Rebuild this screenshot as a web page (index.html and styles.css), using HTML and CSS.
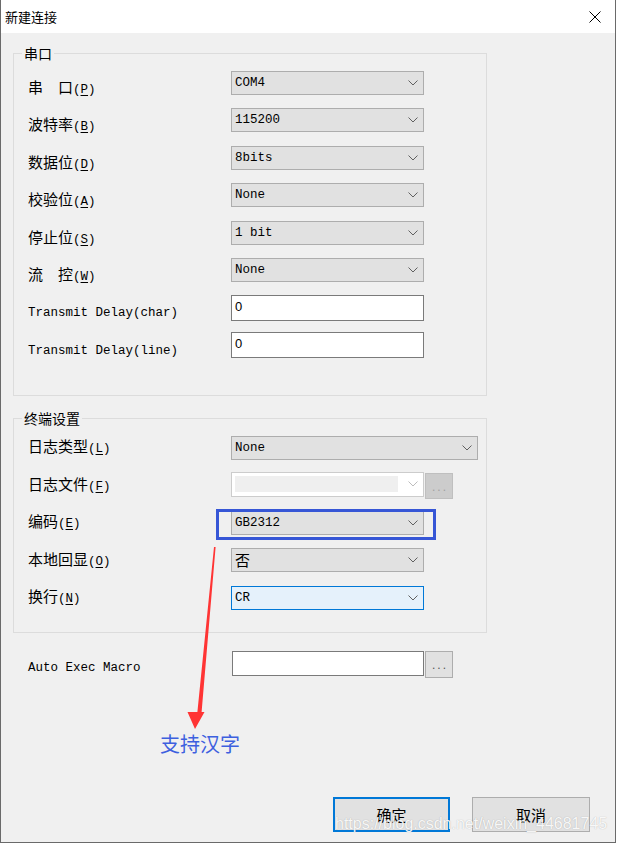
FILE: index.html
```html
<!DOCTYPE html>
<html lang="zh">
<head>
<meta charset="utf-8">
<title>新建连接</title>
<link rel="stylesheet" href="styles.css">
</head>
<body>
<div class="window">
  <div class="titlebar">
    <span class="title">新建连接</span>
    <svg class="close" width="12" height="12" viewBox="0 0 12 12"><path d="M0.5 0.5 L11.5 11.5 M11.5 0.5 L0.5 11.5" stroke="#000" stroke-width="1" fill="none"/></svg>
  </div>
  <div class="content">
    <fieldset class="group g-serial">
      <legend>串口</legend>
      <div class="rows">
        <label class="lbl"><span class="zh">串　口</span>(<u>P</u>)</label>
        <div class="combo"><span class="val">COM4</span><svg class="chev" width="10" height="6" viewBox="0 0 10 6"><path d="M0.5 0.5 L5 5 L9.5 0.5"/></svg></div>

        <label class="lbl"><span class="zh">波特率</span>(<u>B</u>)</label>
        <div class="combo"><span class="val">115200</span><svg class="chev" width="10" height="6" viewBox="0 0 10 6"><path d="M0.5 0.5 L5 5 L9.5 0.5"/></svg></div>

        <label class="lbl"><span class="zh">数据位</span>(<u>D</u>)</label>
        <div class="combo"><span class="val">8bits</span><svg class="chev" width="10" height="6" viewBox="0 0 10 6"><path d="M0.5 0.5 L5 5 L9.5 0.5"/></svg></div>

        <label class="lbl"><span class="zh">校验位</span>(<u>A</u>)</label>
        <div class="combo"><span class="val">None</span><svg class="chev" width="10" height="6" viewBox="0 0 10 6"><path d="M0.5 0.5 L5 5 L9.5 0.5"/></svg></div>

        <label class="lbl"><span class="zh">停止位</span>(<u>S</u>)</label>
        <div class="combo"><span class="val">1 bit</span><svg class="chev" width="10" height="6" viewBox="0 0 10 6"><path d="M0.5 0.5 L5 5 L9.5 0.5"/></svg></div>

        <label class="lbl"><span class="zh">流　控</span>(<u>W</u>)</label>
        <div class="combo"><span class="val">None</span><svg class="chev" width="10" height="6" viewBox="0 0 10 6"><path d="M0.5 0.5 L5 5 L9.5 0.5"/></svg></div>

        <label class="lbl">Transmit Delay(char)</label>
        <div class="edit">0</div>

        <label class="lbl">Transmit Delay(line)</label>
        <div class="edit">0</div>
      </div>
    </fieldset>

    <fieldset class="group g-term">
      <legend>终端设置</legend>
      <div class="rows">
        <label class="lbl"><span class="zh">日志类型</span>(<u>L</u>)</label>
        <div class="combo wide"><span class="val">None</span><svg class="chev" width="10" height="6" viewBox="0 0 10 6"><path d="M0.5 0.5 L5 5 L9.5 0.5"/></svg></div>

        <label class="lbl"><span class="zh">日志文件</span>(<u>F</u>)</label>
        <div class="ctl-pair">
          <div class="combo disabled"><span class="fill"></span><svg class="chev" width="10" height="6" viewBox="0 0 10 6"><path d="M0.5 0.5 L5 5 L9.5 0.5"/></svg></div>
          <div class="dots dis">...</div>
        </div>

        <label class="lbl"><span class="zh">编码</span>(<u>E</u>)</label>
        <div class="combo"><span class="val">GB2312</span><svg class="chev" width="10" height="6" viewBox="0 0 10 6"><path d="M0.5 0.5 L5 5 L9.5 0.5"/></svg></div>

        <label class="lbl"><span class="zh">本地回显</span>(<u>O</u>)</label>
        <div class="combo"><span class="val zh">否</span><svg class="chev" width="10" height="6" viewBox="0 0 10 6"><path d="M0.5 0.5 L5 5 L9.5 0.5"/></svg></div>

        <label class="lbl"><span class="zh">换行</span>(<u>N</u>)</label>
        <div class="combo focus"><span class="val">CR</span><svg class="chev" width="10" height="6" viewBox="0 0 10 6"><path d="M0.5 0.5 L5 5 L9.5 0.5"/></svg></div>
      </div>
    </fieldset>

    <div class="auto-row">
      <label class="lbl">Auto Exec Macro</label>
      <div class="ctl-pair">
        <div class="edit macro"></div>
        <div class="dots">...</div>
      </div>
    </div>

    <div class="footer">
      <button class="btn default">确定</button>
      <button class="btn">取消</button>
    </div>
  </div>

  <div class="highlight"></div>
  <svg class="arrow" width="617" height="845" viewBox="0 0 617 845"><polygon points="214,547 215.6,547 201.6,712 204.5,712 195,729 187.5,712 197.4,712" fill="#ff3434"/></svg>
  <div class="note">支持汉字</div>
  <div class="watermark">https://blog.csdn.net/weixin_44681745</div>
</div>
</body>
</html>
```

FILE: styles.css
```css
html, body {
  margin: 0;
  padding: 0;
  background: #ffffff;
}

.window {
  position: relative;
  width: 616px;
  height: 843px;
  box-sizing: border-box;
  border-left: 1px solid #6a6a6a;
  border-right: 1px solid #6a6a6a;
  border-bottom: 1px solid #6a6a6a;
  background: #f0f0f0;
  font-family: "Liberation Mono", "Noto Sans CJK SC", monospace;
  font-size: 12.5px;
  color: #000;
}

.titlebar {
  height: 33px;
  background: #ffffff;
  display: flex;
  align-items: center;
  padding-left: 4px;
}

.title {
  font-family: "Noto Sans CJK SC", sans-serif;
  font-size: 13px;
  line-height: 18px;
  color: #000;
}

.close {
  margin-left: auto;
  margin-right: 14px;
}

.content {
  display: flex;
  flex-direction: column;
}

.group {
  margin: 10px 0 0 12px;
  padding: 0;
  width: 474px;
  box-sizing: border-box;
  border: 1px solid #dcdcdc;
  min-width: 0;
}

.group legend {
  margin-left: 8px;
  padding: 0 2px;
  font-family: "Noto Sans CJK SC", sans-serif;
  font-size: 14px;
  line-height: 20px;
  height: 20px;
  color: #000;
}

.g-term {
  margin-top: 12px;
}

.rows {
  display: grid;
  grid-template-columns: 203px auto;
  grid-auto-rows: 37.5px;
  align-items: center;
  justify-items: start;
  padding-left: 14px;
}

.g-serial .rows {
  padding-top: 1px;
  padding-bottom: 31px;
}

.g-term .rows {
  padding-top: 1px;
  padding-bottom: 15px;
}

.lbl {
  display: block;
  line-height: 18px;
  white-space: nowrap;
}

.g-serial .lbl {
  margin-top: 11px;
}

.zh {
  font-family: "Noto Sans CJK SC", sans-serif;
  font-size: 15px;
}

.lbl u {
  text-decoration: underline;
  text-underline-offset: 2px;
}

.combo {
  width: 193px;
  height: 24px;
  box-sizing: border-box;
  border: 1px solid #adadad;
  background: #e1e1e1;
  display: flex;
  align-items: center;
  justify-content: space-between;
  padding: 0 5px 0 3px;
}

.combo .val {
  line-height: 18px;
  white-space: pre;
}

.combo.wide {
  width: 247px;
}

.combo.focus {
  border-color: #0078d7;
  background: #e5f1fb;
}

.combo.disabled {
  height: 25px;
  background: #ffffff;
  border-color: #cccccc;
  padding: 3px 5px 3px 3px;
}

.combo.disabled .fill {
  width: 163px;
  height: 16px;
  background: #efefef;
}

.chev path {
  fill: none;
  stroke: #606060;
  stroke-width: 1;
}

.combo.disabled .chev path {
  stroke: #bdbdbd;
}

.edit {
  width: 193px;
  height: 26px;
  box-sizing: border-box;
  border: 1px solid #7a7a7a;
  background: #ffffff;
  padding: 0 3px;
  font-family: "Liberation Sans", sans-serif;
  font-size: 13px;
  line-height: 22px;
}

.edit.macro {
  width: 192px;
  height: 25px;
}

.ctl-pair {
  display: flex;
  align-items: flex-start;
  gap: 1px;
}

.dots {
  width: 28px;
  height: 27px;
  box-sizing: border-box;
  border: 1px solid #adadad;
  background: #e1e1e1;
  color: #555;
  font-family: "Liberation Sans", sans-serif;
  font-size: 12px;
  letter-spacing: 2px;
  text-align: center;
  line-height: 26px;
  padding-left: 2px;
}

.dots.dis {
  height: 26px;
  margin-top: 1px;
  background: #cccccc;
  border-color: #bfbfbf;
  color: #a0a0a0;
}

.auto-row {
  display: grid;
  grid-template-columns: 204px auto;
  align-items: center;
  padding-left: 27px;
  margin-top: 18px;
}

.auto-row .lbl {
  margin-top: 7px;
}

.footer {
  display: flex;
  justify-content: flex-end;
  gap: 22px;
  padding-right: 25px;
  margin-top: 119px;
}

.btn {
  width: 118px;
  height: 35px;
  box-sizing: border-box;
  border: 1px solid #adadad;
  background: #e1e1e1;
  font-family: "Noto Sans CJK SC", sans-serif;
  font-size: 15px;
  color: #000;
  padding: 0;
  margin: 0;
}

.btn.default {
  width: 117px;
  border: 2px solid #0078d7;
}

.highlight {
  position: absolute;
  left: 215px;
  top: 509px;
  width: 220px;
  height: 31px;
  box-sizing: border-box;
  border: 3px solid #3656d6;
}

.arrow {
  position: absolute;
  left: -1px;
  top: 0;
}

.note {
  position: absolute;
  left: 159px;
  top: 733px;
  font-family: "Noto Sans CJK SC", sans-serif;
  font-size: 20px;
  line-height: 22px;
  color: #3d60df;
}

.watermark {
  position: absolute;
  left: 334px;
  top: 815px;
  font-family: "Liberation Sans", sans-serif;
  font-size: 16px;
  line-height: 18px;
  color: rgba(255, 255, 255, 0.92);
  text-shadow: 0 0 1px rgba(90, 90, 90, 0.45);
  white-space: nowrap;
}
```
